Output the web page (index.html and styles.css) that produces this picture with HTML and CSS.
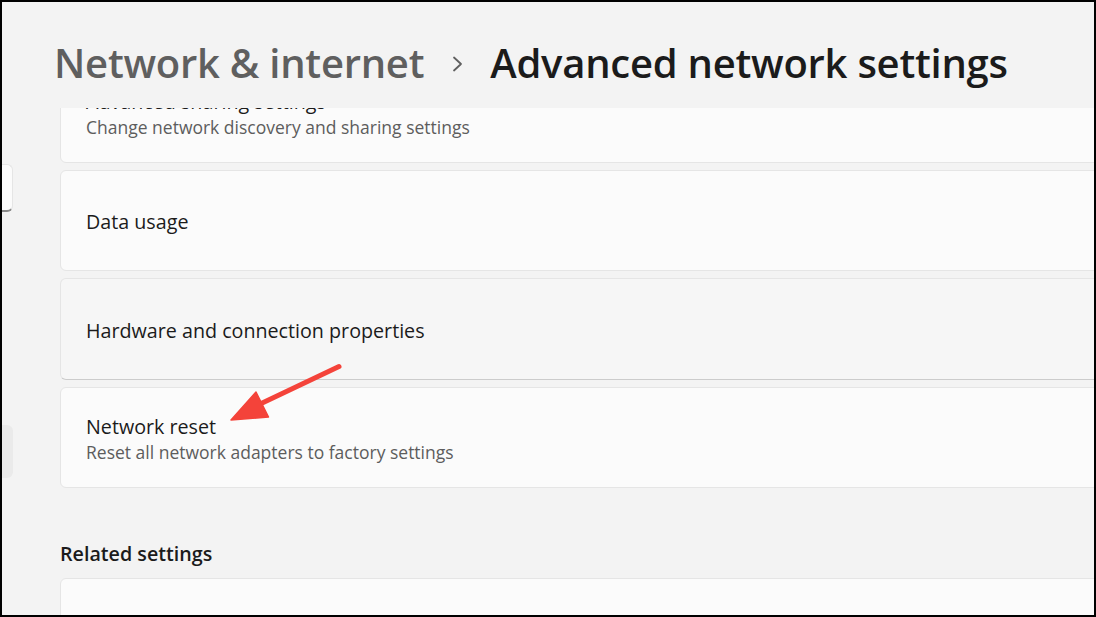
FILE: index.html
```html
<!DOCTYPE html>
<html lang="en">
<head>
<meta charset="utf-8">
<title>Advanced network settings</title>
<link rel="stylesheet" href="styles.css">
</head>
<body>
<div class="frame">
  <aside class="sidebar">
    <div class="nav-search"></div>
    <div class="nav-item nav-item--active"></div>
  </aside>
  <main class="main">
    <header class="page-header">
      <h1 class="crumbs">
        <span class="crumb-parent">Network &amp; internet</span>
        <svg class="crumb-sep" width="12" height="16" viewBox="0 0 12 16"><polyline points="2,1.5 9,8 2,14.5" fill="none" stroke="#5f5f5f" stroke-width="1.8" stroke-linecap="round" stroke-linejoin="round"/></svg>
        <span class="crumb-current">Advanced network settings</span>
      </h1>
    </header>
    <div class="scroll">
      <div class="scroll-inner">
        <div class="card">
          <div class="card-title">Advanced sharing settings</div>
          <div class="card-sub">Change network discovery and sharing settings</div>
        </div>
        <div class="card">
          <div class="card-title">Data usage</div>
        </div>
        <div class="card card--hover">
          <div class="card-title">Hardware and connection properties</div>
        </div>
        <div class="card">
          <div class="card-title">Network reset</div>
          <div class="card-sub">Reset all network adapters to factory settings</div>
        </div>
        <h2 class="section-title">Related settings</h2>
        <div class="card"></div>
      </div>
    </div>
  </main>
  <svg class="annotation" width="1092" height="613" viewBox="2 2 1092 613">
    <line x1="339" y1="366.5" x2="258" y2="405" stroke="#f4433a" stroke-width="5" stroke-linecap="round"/>
    <polygon points="231,420 256,392 268.5,417" fill="#f4433a" stroke="#f4433a" stroke-width="1.5" stroke-linejoin="round"/>
  </svg>
</div>
</body>
</html>
```
FILE: styles.css
```css
* { box-sizing: border-box; }

html, body {
  margin: 0;
  padding: 0;
  background: #000;
}

.frame {
  position: relative;
  width: 1096px;
  height: 617px;
  border: 2px solid #000;
  background: #f3f3f3;
  display: grid;
  grid-template-columns: 11px 1fr;
  overflow: hidden;
  font-family: "Open Sans", "Noto Sans", sans-serif;
  color: #1b1b1b;
}

/* partial sidebar on the left */
.sidebar {
  overflow: hidden;
  display: flex;
  flex-direction: column;
  align-items: flex-end;
  padding-top: 162px;
}

.nav-search {
  flex: none;
  width: 200px;
  height: 48px;
  background: #fbfbfb;
  border: 1px solid #e5e5e5;
  border-bottom: 2px solid #8a8a8a;
  border-radius: 6px;
}

.nav-item {
  flex: none;
  width: 200px;
  height: 53px;
  margin-top: 213px;
  border-radius: 6px;
}

.nav-item--active {
  background: #eaeaea;
}

.main {
  display: flex;
  flex-direction: column;
  min-width: 0;
  overflow: hidden;
}

.page-header {
  flex: none;
  height: 106px;
  padding-left: 41px;
  display: flex;
  align-items: center;
  background: #f3f3f3;
}

.crumbs {
  margin: 0;
  margin-top: 15px;
  display: flex;
  align-items: center;
  font-size: 40px;
  font-weight: 600;
  white-space: nowrap;
  line-height: 54px;
  letter-spacing: -0.25px;
}

.crumb-parent {
  color: #5f5f5f;
}

.crumb-sep {
  margin: 2px 26px 0 28px;
}

.crumb-current {
  color: #1b1b1b;
}

.scroll {
  flex: 1;
  overflow: hidden;
}

.scroll-inner {
  margin-top: -47px;
  padding-left: 47px;
  margin-right: -12px;
  display: flex;
  flex-direction: column;
  gap: 7px;
}

.card {
  height: 101.5px;
  background: #fbfbfb;
  border: 1px solid #e5e5e5;
  border-radius: 6px;
  padding: 3px 0 0 25px;
  display: flex;
  flex-direction: column;
  justify-content: center;
}

.card--hover {
  background: #f6f6f6;
  border-bottom-color: #cccccc;
}

.card-title {
  font-size: 19.7px;
  line-height: 27px;
  color: #1b1b1b;
}

.card-sub {
  font-size: 17.5px;
  line-height: 24px;
  color: #5d5d5d;
}

.section-title {
  margin: 45px 0 3px 0;
  font-size: 19.7px;
  font-weight: 600;
  line-height: 28px;
  color: #1b1b1b;
}

.annotation {
  position: absolute;
  left: 0;
  top: 0;
  pointer-events: none;
}
```
